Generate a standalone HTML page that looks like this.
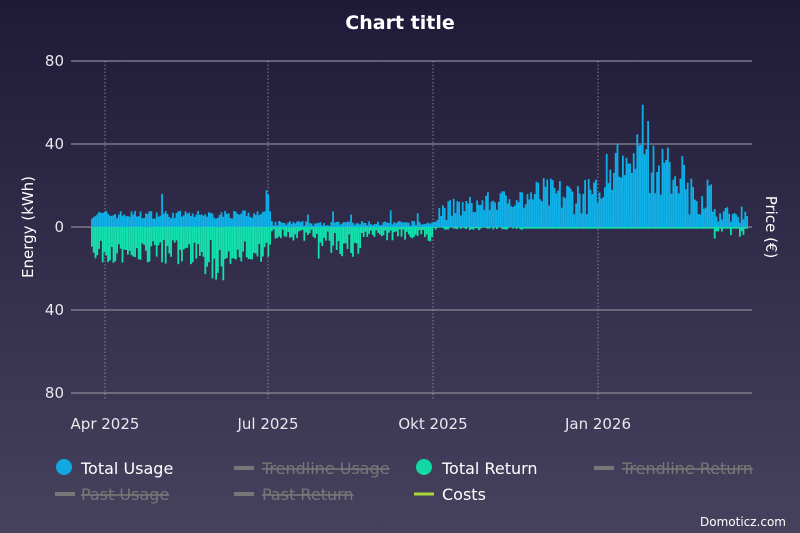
<!DOCTYPE html>
<html><head><meta charset="utf-8"><style>
html,body{margin:0;padding:0}
body{width:800px;height:533px;overflow:hidden;background:linear-gradient(#1e1a38,#46425e);font-family:"DejaVu Sans","Liberation Sans",sans-serif;}
svg{display:block}
</style></head><body>
<svg id="s" width="800" height="533" viewBox="0 0 800 533" xmlns="http://www.w3.org/2000/svg">
<text x="400" y="29" text-anchor="middle" fill="#fff" font-size="19" font-weight="bold">Chart title</text>
<g stroke="#8a8a96" stroke-width="1.2">
<line x1="71" y1="61" x2="752" y2="61"/><line x1="71" y1="144" x2="752" y2="144"/><line x1="71" y1="227" x2="752" y2="227"/><line x1="71" y1="310" x2="752" y2="310"/><line x1="71" y1="393" x2="752" y2="393"/>
</g>
<g stroke="#9a9aa8" stroke-width="0.8" stroke-dasharray="1.5,2">
<line x1="105" y1="61" x2="105" y2="400"/><line x1="268" y1="61" x2="268" y2="400"/><line x1="433" y1="61" x2="433" y2="400"/><line x1="598" y1="61" x2="598" y2="400"/>
</g>
<g fill="#e8e8ee" font-size="15" text-anchor="end">
<text x="64" y="66">80</text><text x="64" y="149">40</text><text x="64" y="232">0</text><text x="64" y="315">40</text><text x="64" y="398">80</text>
</g>
<g fill="#e8e8ee" font-size="15" text-anchor="middle">
<text x="105" y="429">Apr 2025</text><text x="268" y="429">Jul 2025</text><text x="433" y="429">Okt 2025</text><text x="598" y="429">Jan 2026</text>
</g>
<text transform="translate(33,227) rotate(-90)" text-anchor="middle" fill="#fff" font-size="15">Energy (kWh)</text>
<text transform="translate(766,227) rotate(90)" text-anchor="middle" fill="#fff" font-size="15">Price (€)</text>
<g id="bars"></g>
<g font-size="16">
<circle cx="64" cy="467" r="8" fill="#12a8e0"/><text x="81" y="474" fill="#fff">Total Usage</text>
<line x1="234" y1="468" x2="254" y2="468" stroke="#777" stroke-width="4"/><text x="262" y="474" fill="#777" text-decoration="line-through">Trendline Usage</text>
<circle cx="424" cy="467" r="8" fill="#10d9a6"/><text x="442" y="474" fill="#fff">Total Return</text>
<line x1="594" y1="468" x2="614" y2="468" stroke="#777" stroke-width="4"/><text x="622" y="474" fill="#777" text-decoration="line-through">Trendline Return</text>
<line x1="55" y1="494" x2="75" y2="494" stroke="#777" stroke-width="4"/><text x="81" y="500" fill="#777" text-decoration="line-through">Past Usage</text>
<line x1="234" y1="494" x2="254" y2="494" stroke="#777" stroke-width="4"/><text x="262" y="500" fill="#777" text-decoration="line-through">Past Return</text>
<line x1="414" y1="494" x2="434" y2="494" stroke="#a8d83a" stroke-width="3"/><text x="442" y="500" fill="#fff">Costs</text>
</g>
<text x="786" y="526" text-anchor="end" fill="#fff" font-size="12">Domoticz.com</text>
</svg>
<script>
var seed=7;function r(){seed=(seed*16807)%2147483647;return seed/2147483647;}
var g=document.getElementById('bars'),h='',k=2.075;
function u(d){ if(d<100)return 4+r()*4+(r()<0.05?10:0);
 if(d<190)return 0.5+r()*2.5+(r()<0.05?5:0);
 if(d<240)return 2+(d-190)/50*8+r()*10;
 if(d<280)return 6+r()*18;
 if(d<310)return 10+(d-280)*0.8+r()*14+(r()<0.15?15:0);
 if(d<330)return 12+r()*28;
 if(d<345)return 6+r()*18+(r()<0.15?15:0);
 return 2+r()*8;}
function rt(d){ if(d<100)return 6+r()*12+(d>60&&d<85&&r()<0.3?8:0);
 if(d<190)return 1+r()*6+(d>125&&d<150?r()*10:0);
 if(d<240)return r()*1.5;
 if(d<345)return 0.8;
 return r()<0.4?2+r()*4:0.8;}
for(var d=0;d<365;d++){var x=91+d*1.8,a=u(d),b=rt(d);
 h+='<rect x="'+x.toFixed(1)+'" y="'+(227-a*k).toFixed(1)+'" width="1.8" height="'+(a*k).toFixed(1)+'" fill="#0fb0e8"/>';
 h+='<rect x="'+x.toFixed(1)+'" y="227" width="1.8" height="'+(b*k).toFixed(1)+'" fill="#12e0ad"/>';}
g.innerHTML=h;
</script>
</body></html>
